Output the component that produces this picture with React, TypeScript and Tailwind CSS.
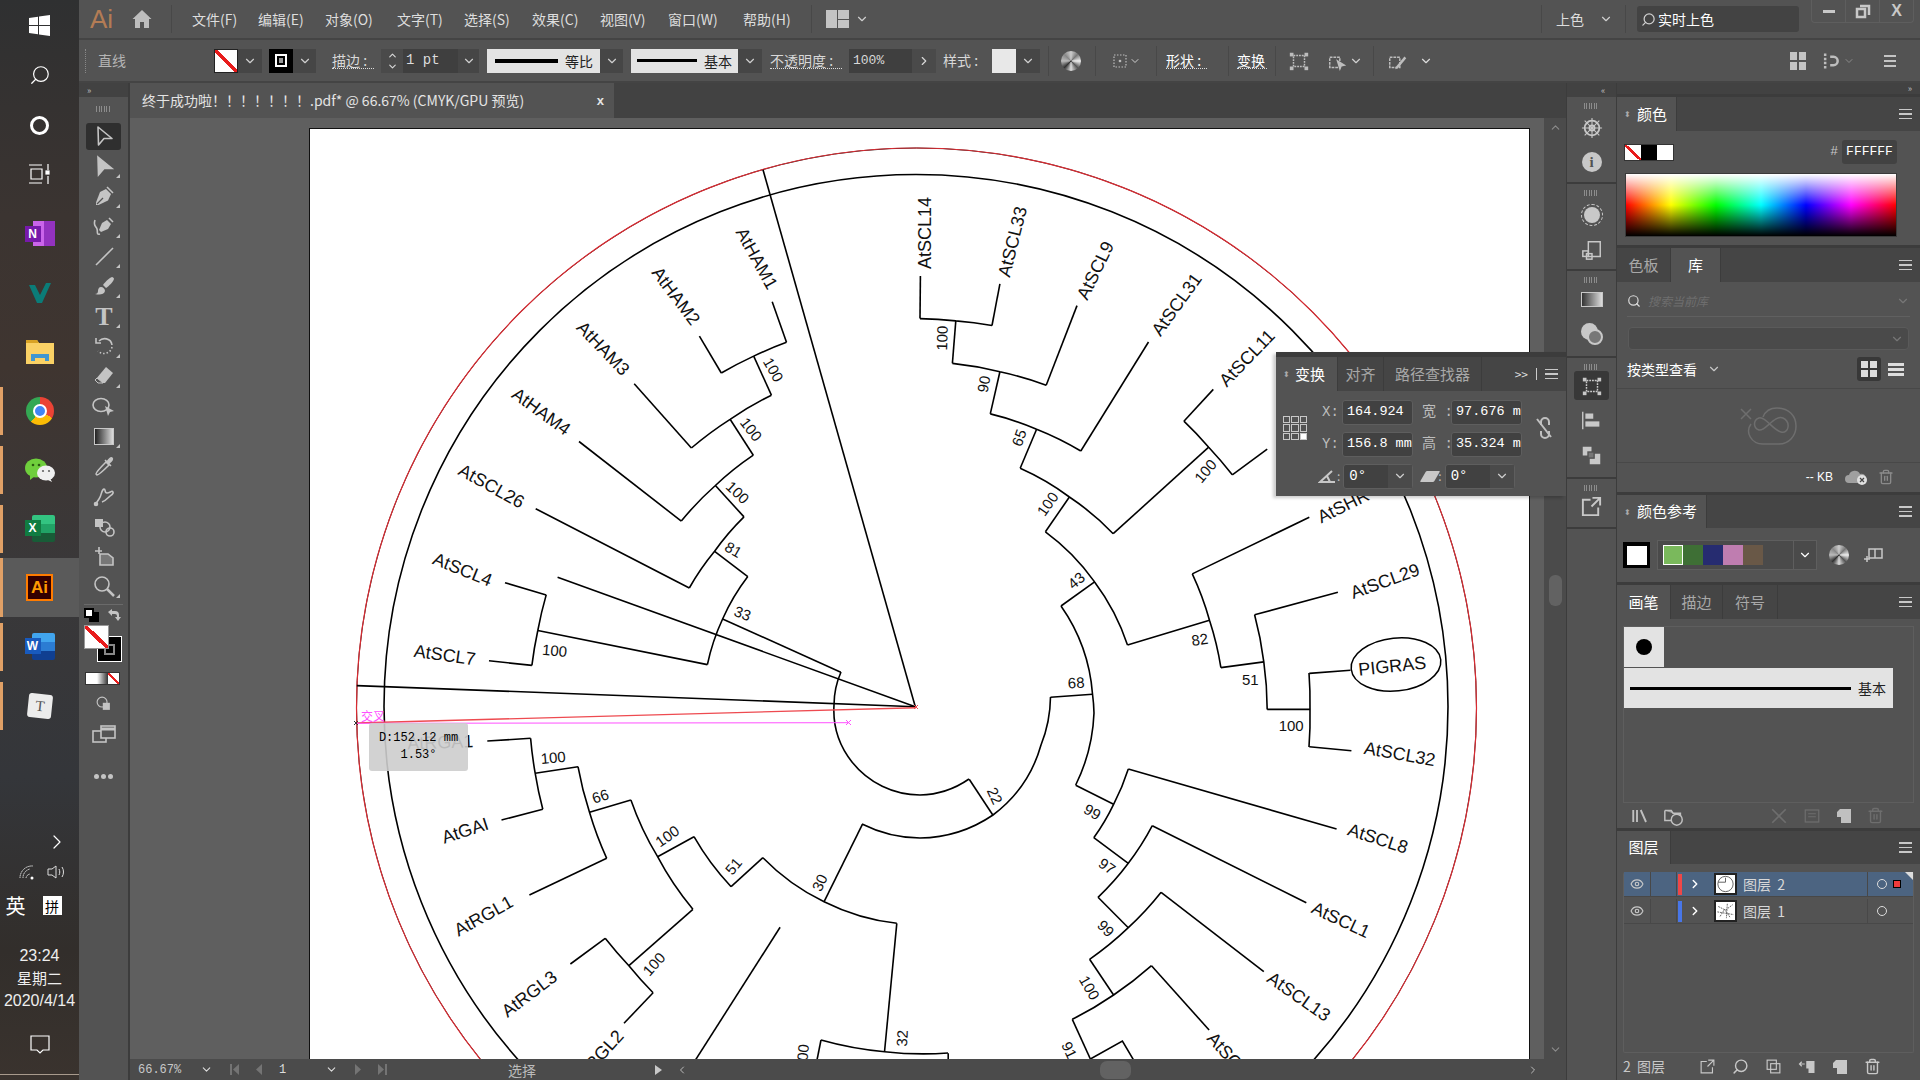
import type { ReactNode } from 'react';
import { ChevronDown, ChevronRight, Eye, Search, Trash2 } from 'lucide-react';

type Zone = (x: number, y: number) => [number, number];

// crop coordinates -> page coordinates, the tree was traced from four crops
const P: Zone = (x, y) => [x, y];
const A: Zone = (x, y) => [300 + x / 2.376, 120 + y / 2.613];
const B: Zone = (x, y) => [880 + x / 2.376, 120 + y / 2.613];
const C: Zone = (x, y) => [340 + x / 2.613, 680 + y / 3];
const D: Zone = (x, y) => [880 + x / 2.376, 680 + y / 3];

const CX = 916;
const CY = 706;

const points = (z: Zone, n: number[]) => {
  const out: [number, number][] = [];
  for (let i = 0; i < n.length; i += 2) out.push(z(n[i], n[i + 1]));
  return out;
};

const l = (z: Zone, ...n: number[]) =>
  points(z, n)
    .map(([x, y], i) => `${i ? 'L' : 'M'}${x.toFixed(1)} ${y.toFixed(1)}`)
    .join(' ');

const a = (z: Zone, ...n: number[]) => {
  const pts = points(z, n);
  let d = `M${pts[0][0].toFixed(1)} ${pts[0][1].toFixed(1)}`;
  for (let i = 1; i < pts.length; i++) {
    const [x0, y0] = pts[i - 1];
    const [x1, y1] = pts[i];
    const r = (Math.hypot(x0 - CX, y0 - CY) + Math.hypot(x1 - CX, y1 - CY)) / 2;
    const sweep = (x0 - CX) * (y1 - CY) - (y0 - CY) * (x1 - CX) > 0 ? 1 : 0;
    d += ` A${r.toFixed(1)} ${r.toFixed(1)} 0 0 ${sweep} ${x1.toFixed(1)} ${y1.toFixed(1)}`;
  }
  return d;
};

const TREE = [
  l(A, 1100, 130, 1462, 1533),
  l(A, 135, 1478, 1462, 1533),
  l(A, 612, 1195, 1462, 1533),
  l(A, 1122, 475, 1156, 581),
  a(A, 1156, 581, 1078, 617, 1001, 661),
  l(A, 1001, 661, 949, 565),
  l(A, 1078, 617, 1120, 719),
  a(A, 1120, 719, 1022, 782, 930, 857),
  l(A, 930, 857, 794, 689),
  l(A, 1022, 782, 1077, 876),
  a(A, 1077, 876, 987, 955, 906, 1048),
  l(A, 906, 1048, 663, 840),
  l(A, 987, 955, 1055, 1037),
  a(A, 1055, 1037, 985, 1127, 925, 1223),
  l(A, 925, 1223, 560, 1016),
  l(A, 985, 1127, 1064, 1193),
  a(A, 1064, 1193, 1004, 1304, 968, 1423),
  l(A, 968, 1423, 565, 1334),
  a(A, 585, 1241, 565, 1334, 551, 1425),
  l(A, 585, 1241, 487, 1209),
  l(A, 551, 1425, 449, 1413),
  l(A, 1004, 1304, 1285, 1443),
  a(P, 841, 672, 834, 705, 852, 762, 920, 795, 969, 779),
  l(D, 268, 405, 212, 298),
  a(P, 1050.5, 697, 1041, 745, 993, 815, 920, 838, 862, 824),
  l(C, 1365, 433, 1265, 665),
  a(C, 1105, 533, 1265, 665, 1455, 730),
  l(C, 1105, 533, 1022, 620),
  a(C, 925, 470, 1022, 620),
  l(C, 925, 470, 830, 530),
  a(C, 760, 360, 830, 530, 922, 688),
  l(C, 760, 360, 652, 397),
  a(C, 622, 260, 652, 397, 697, 535),
  l(C, 622, 260, 510, 280),
  a(C, 498, 175, 510, 280, 530, 388),
  l(C, 498, 175, 385, 183),
  l(C, 530, 388, 422, 420),
  l(C, 697, 535, 495, 645),
  l(C, 922, 688, 755, 857),
  a(C, 693, 775, 755, 857, 818, 938),
  l(C, 693, 775, 602, 852),
  l(C, 818, 938, 742, 1030),
  l(C, 1150, 742, 925, 1147),
  l(C, 1455, 730, 1423, 1113),
  a(P, 821, 1040, 884.6, 1051.7, 948, 1053),
  l(P, 821, 1040, 816, 1065),
  l(D, 162, 1120, 162, 1150),
  l(B, 96, 408, 95, 519),
  a(B, 95, 519, 180, 525, 266, 537),
  l(B, 266, 537, 285, 428),
  l(B, 180, 525, 172, 636),
  a(B, 172, 636, 285, 658, 395, 693),
  l(B, 395, 693, 468, 485),
  l(B, 285, 658, 262, 768),
  a(B, 262, 768, 372, 808, 477, 865),
  l(B, 477, 865, 638, 580),
  l(B, 372, 808, 333, 910),
  a(B, 333, 910, 450, 985, 554, 1081),
  l(B, 554, 1081, 781, 855),
  a(B, 722, 787, 781, 855, 837, 927),
  l(B, 722, 787, 792, 704),
  l(B, 837, 927, 920, 860),
  l(B, 450, 985, 393, 1076),
  a(B, 393, 1076, 510, 1207, 588, 1372),
  l(B, 510, 1207, 430, 1270),
  l(B, 588, 1372, 783, 1307),
  a(B, 742, 1186, 783, 1307, 810, 1431),
  l(B, 742, 1186, 1020, 1038),
  l(B, 810, 1431, 912, 1416),
  a(B, 890, 1293, 912, 1416, 920, 1540),
  l(B, 890, 1293, 1088, 1234),
  l(B, 920, 1540, 1022, 1540),
  a(P, 1309, 673, 1310, 709, 1309, 747),
  l(D, 1020, 200, 1120, 212),
  l(B, 1020, 1446, 1118, 1438),
  a(P, 1061, 606, 1092.5, 694, 1094, 713, 1075.7, 785),
  l(D, 405, 52, 505, 43),
  l(D, 465, 316, 555, 373),
  a(D, 590, 267, 555, 373, 508, 473),
  l(D, 590, 267, 1085, 447),
  l(D, 508, 473, 590, 550),
  a(D, 647, 437, 590, 550, 518, 652),
  l(D, 647, 437, 1013, 668),
  l(D, 518, 652, 590, 743),
  a(D, 668, 637, 590, 743, 498, 838),
  l(D, 668, 637, 912, 875),
  l(D, 498, 838, 555, 945),
  a(D, 645, 857, 555, 945, 457, 1018),
  l(D, 645, 857, 782, 1050),
  l(D, 457, 1018, 500, 1137),
  l(D, 500, 1137, 576, 1083, 605, 1145),
];

type Label = [Zone, number, number, number, string, number?, 'start' | 'end'?];

const LABELS: Label[] = [
  [A, 1085, 362, 61, 'AtHAM1'],
  [A, 893, 460, 53, 'AtHAM2'],
  [A, 720, 597, 46, 'AtHAM3'],
  [A, 573, 762, 36, 'AtHAM4'],
  [A, 455, 957, 29, 'AtSCL26'],
  [A, 386, 1175, 22, 'AtSCL4'],
  [A, 344, 1398, 8, 'AtSCL7'],
  [A, 1125, 652, 60, '100', 15],
  [A, 1072, 808, 52, '100', 15],
  [A, 1040, 973, 43, '100', 15],
  [A, 1030, 1122, 30, '81', 15],
  [A, 1052, 1289, 20, '33', 15],
  [A, 605, 1386, 5, '100', 15],
  [B, 107, 295, -90, 'AtSCL14'],
  [B, 315, 318, -76, 'AtSCL33'],
  [B, 512, 393, -64, 'AtSCL9'],
  [B, 705, 482, -54, 'AtSCL31'],
  [B, 872, 622, -46, 'AtSCL11'],
  [B, 1042, 1040, -26, 'AtSHR', 18, 'start'],
  [B, 1200, 1205, -20, 'AtSCL29'],
  [B, 1217, 1427, -6, 'PIGRAS'],
  [B, 147, 570, -88, '100', 15],
  [B, 246, 690, -80, '90', 15],
  [B, 330, 830, -70, '65', 15],
  [B, 398, 1003, -55, '100', 15],
  [B, 466, 1203, -40, '43', 15],
  [B, 760, 1357, -8, '82', 15],
  [B, 880, 1463, 0, '51', 15],
  [B, 466, 1470, -3, '68', 15],
  [B, 773, 917, -50, '100', 15],
  [D, 977, 135, 0, '100', 15],
  [D, 1235, 222, 10, 'AtSCL32'],
  [D, 1183, 476, 18, 'AtSCL8'],
  [D, 1095, 720, 25, 'AtSCL1'],
  [D, 995, 950, 35, 'AtSCL13'],
  [D, 785, 1065, 48, 'AtSCL6', 18, 'start'],
  [D, 505, 395, 30, '99', 15],
  [D, 540, 558, 35, '97', 15],
  [D, 537, 745, 45, '99', 15],
  [D, 498, 923, 60, '100', 15],
  [D, 450, 1110, 65, '91', 15],
  [D, 273, 347, 65, '22', 15],
  [D, 52, 1075, -88, '32', 15],
  [C, 557, 232, -5, '100', 15],
  [C, 680, 348, -18, '66', 15],
  [C, 855, 468, -35, '100', 15],
  [C, 1028, 558, -50, '51', 15],
  [C, 1253, 608, -65, '30', 15],
  [C, 820, 852, -48, '100', 15],
  [C, 327, 452, -18, 'AtGAI'],
  [C, 375, 708, -29, 'AtRGL1'],
  [C, 495, 942, -37, 'AtRGL3'],
  [C, 732, 1058, -48, 'AtRGL2', 18, 'end'],
  [C, 1208, 1130, -85, '100', 15],
  [C, 262, 187, -2, 'AtRGA1'],
];

function Tree() {
  return (
    <svg width={1414} height={941} viewBox="130 118 1414 941" className="block">
      <rect x="309.5" y="128.5" width="1220" height="960" fill="#fff" stroke="#111" />
      <circle cx="916.5" cy="708" r="560" fill="none" stroke="#222" strokeWidth="1" />
      <circle cx="916.5" cy="708" r="560" fill="none" stroke="#d92b32" strokeWidth="1.2" />
      <circle cx="916" cy="706.5" r="532" fill="none" stroke="#000" strokeWidth="1.6" />
      {TREE.map((d, i) => (
        <path key={i} d={d} fill="none" stroke="#000" strokeWidth="1.6" />
      ))}
      <ellipse cx="1396" cy="664.5" rx="45" ry="26.5" transform="rotate(-6 1396 664.5)" fill="#fff" stroke="#000" strokeWidth="1.5" />
      {LABELS.map(([z, x, y, rot, text, size = 18, anchor = 'middle'], i) => {
        const [px, py] = z(x, y);
        return (
          <text
            key={i}
            x={px}
            y={py}
            fontSize={size}
            textAnchor={anchor}
            dominantBaseline="central"
            transform={`rotate(${rot} ${px} ${py})`}
            fill="#111"
            className="font-['Liberation_Sans',sans-serif]"
          >
            {text}
          </text>
        );
      })}
      <path d="M356 723 L916 707.7" stroke="#ee4a50" strokeWidth="1.4" fill="none" />
      <path d="M356 723.3 L849 722.7" stroke="#ff50ff" strokeWidth="1" fill="none" />
      <path d="M846 720 l5 5 m0 -5 l-5 5" stroke="#ff50ff" fill="none" />
      <path d="M354 721 l4 4 m0 -4 l-4 4" stroke="#333" fill="none" />
      <path d="M914 705 l4 4 m0 -4 l-4 4" stroke="#ee4a50" fill="none" />
      <text x="361" y="721" fontSize="12" fill="#ff50ff" className="font-['Noto_Sans_CJK_SC',sans-serif]">
        交叉
      </text>
    </svg>
  );
}

function Ic({ w = 24, h = w, vb = '0 0 24 24', children }: { w?: number; h?: number; vb?: string; children: ReactNode }) {
  return (
    <svg width={w} height={h} viewBox={vb} fill="none" stroke="currentColor" strokeWidth="1.6" className="block shrink-0 overflow-visible">
      {children}
    </svg>
  );
}

const PEN = 'M14 5l5 5-3 6.5L6.5 21 4 21l0-2.500L8 8z';

const TOOLS: { icon: ReactNode; fly?: boolean; active?: boolean }[] = [
  { active: true, icon: <Ic><path d="M6 3l14 11.500h-8L6.500 21z" strokeLinejoin="round" /></Ic> },
  { fly: true, icon: <Ic><path d="M6 3l14 11.500h-8L6.500 21z" fill="currentColor" /></Ic> },
  { fly: true, icon: <Ic><path d={PEN} fill="currentColor" stroke="none" /><path d="M15 3l6 6" /><path d="M5 20l6-6" stroke="#535353" strokeWidth="1.200" /></Ic> },
  { fly: true, icon: <Ic><path d="M15 6l4 4-3 5-7 3-2-2 3-7z" fill="currentColor" stroke="none" /><path d="M17 4l4 4" /><path d="M3 6c-2 6 1 6 2 9s-1 6 3 5" /></Ic> },
  { fly: true, icon: <Ic><path d="M4 21L21 4" /></Ic> },
  { fly: true, icon: <Ic><path d="M20 3c-3 1-7 5-9 8l3 3c3-2 7-6 8-9 0-1-1-2-2-2z" fill="currentColor" stroke="none" /><path d="M9 13c-2 0-3 2-3 4s-1 3-3 3c4 1 9 1 10-3 0-2-2-4-4-4z" fill="currentColor" stroke="none" /></Ic> },
  { fly: true, icon: <Ic><text x="12" y="21" fontSize="26" fontWeight="700" textAnchor="middle" fill="currentColor" stroke="none" className="font-['Liberation_Serif',serif]">T</text></Ic> },
  { fly: true, icon: <Ic><path d="M7 7c4-4 12-3 13 4" /><path d="M4 4v5h5" /><path d="M20 13c-1 6-9 9-14 4" strokeDasharray="1.500 2" /></Ic> },
  { fly: true, icon: <Ic><path d="M14 3l7 6-8 10H8l-4-4z" fill="currentColor" stroke="none" /><path d="M8 19h-2l-3-3 2-2 6 5z" stroke="currentColor" fill="#535353" strokeWidth="1" /></Ic> },
  { icon: <Ic><ellipse cx="9" cy="11" rx="8" ry="6.500" /><path d="M13 12l9 5-4 1-2 4z" fill="currentColor" stroke="none" /></Ic> },
  { fly: true, icon: <div className="h-[17px] w-[20px] border border-[#c8c8c8] bg-[linear-gradient(to_right,#222,#ddd)]" /> },
  { icon: <Ic><path d="M4 20c0-2 8-10 10-12l3 3c-2 2-10 10-12 10z" /><path d="M13 6l6 6M15 8c2-3 4-5 5-4s0 3-3 5z" fill="currentColor" /></Ic> },
  { icon: <Ic><path d="M3 21l4-6c3-4 2-9 5-10 2 0 0 4 3 4s5-3 6-1-2 3-4 5-4 4-7 5" /><circle cx="4" cy="20" r="1.500" fill="currentColor" /></Ic> },
  { icon: <Ic><rect x="3" y="5" width="8" height="8" fill="currentColor" stroke="none" /><circle cx="13" cy="13" r="5" /><circle cx="18" cy="18" r="4" /></Ic> },
  { icon: <Ic><path d="M3 7h7M7 3v7" /><path d="M8 10h8l5 4v7H8z" fill="#777" /></Ic> },
  { fly: true, icon: <Ic><circle cx="10" cy="10" r="7" /><path d="M15 15l7 7" strokeWidth="2.500" /></Ic> },
];

function Chev({ size = 14, className = 'text-[#cfcfcf]' }: { size?: number; className?: string }) {
  return <ChevronDown size={size} strokeWidth={2} className={`shrink-0 ${className}`} />;
}

function Drop({ w = 24 }: { w?: number }) {
  return (
    <div className="flex h-full items-center justify-center bg-[#464646]" style={{ width: w }}>
      <Chev />
    </div>
  );
}

function Sep({ ml }: { ml: string }) {
  return <div className={`h-[30px] w-px bg-[#484848] ${ml}`} />;
}

const MENU = [
  ['文件(F)', 66],
  ['编辑(E)', 67],
  ['对象(O)', 72],
  ['文字(T)', 67],
  ['选择(S)', 68],
  ['效果(C)', 68],
  ['视图(V)', 68],
  ['窗口(W)', 75],
  ['帮助(H)', 68],
] as const;

function MenuBar() {
  return (
    <div className="flex h-[38px] items-center bg-[#535353] text-[14px] text-[#dedede]">
      <span className="ml-[11px] w-[42px] text-[26px] leading-none text-[#b37c55] font-['Liberation_Sans',sans-serif]">Ai</span>
      <svg width="20" height="20" viewBox="0 0 20 20" className="text-[#bdbdbd]">
        <path d="M10 1L0.500 10H3v9h5v-6h4v6h5v-9h2.500z" fill="currentColor" />
      </svg>
      <div className="ml-[19px] mr-[20px] h-[28px] w-px bg-[#484848]" />
      {MENU.map(([label, w]) => (
        <span key={label} className="shrink-0" style={{ width: w }}>
          {label}
        </span>
      ))}
      <div className="h-[28px] w-px bg-[#484848]" />
      <div className="ml-[14px] grid h-[18px] w-[23px] grid-cols-2 gap-[1px]">
        <div className="row-span-2 bg-[#c4c4c4]" />
        <div className="bg-[#c4c4c4]" />
        <div className="bg-[#c4c4c4]" />
      </div>
      <Chev className="ml-[6px] text-[#cfcfcf]" />
      <div className="ml-auto h-[28px] w-px bg-[#484848]" />
      <span className="ml-[14px]">上色</span>
      <Chev className="ml-[15px] text-[#cfcfcf]" />
      <div className="ml-[12px] h-[28px] w-px bg-[#484848]" />
      <div className="ml-[11px] flex h-[26px] w-[162px] items-center gap-[1px] rounded-[3px] bg-[#434343] pl-[4px] text-white">
        <Search size={15} className="-scale-x-100 text-[#d0d0d0]" />
        <span className="ml-[1px]">实时上色</span>
      </div>
      <div className="ml-[12px] mr-[6px] flex h-[23px] w-[103px] self-start rounded-b-[4px] border border-t-0 border-[#5e5e5e] text-[#c8c8c8]">
        <div className="flex flex-1 items-center justify-center border-r border-[#5e5e5e]">
          <div className="h-[3px] w-[12px] bg-[#c8c8c8]" />
        </div>
        <div className="flex flex-1 items-center justify-center border-r border-[#5e5e5e]">
          <svg width="18" height="18" viewBox="0 0 18 18" fill="none" stroke="currentColor" strokeWidth="2.500">
            <path d="M6 4h9v9M3 7h8v8H3z" />
          </svg>
        </div>
        <div className="flex flex-1 items-center justify-center text-[16px] font-bold font-['Liberation_Sans',sans-serif]">X</div>
      </div>
    </div>
  );
}

function TransformGlyph({ w = 22 }: { w?: number }) {
  return (
    <Ic w={w}>
      <rect x="6" y="6" width="12" height="12" strokeDasharray="2 1" />
      <rect x="2" y="3" width="4" height="4" fill="currentColor" stroke="none" />
      <rect x="18" y="3" width="4" height="4" fill="currentColor" stroke="none" />
      <rect x="2" y="18" width="4" height="4" fill="currentColor" stroke="none" />
      <rect x="18" y="18" width="4" height="4" fill="currentColor" stroke="none" />
    </Ic>
  );
}

function Wheel({ size = 20 }: { size?: number }) {
  return (
    <div
      className="shrink-0 rounded-full bg-[conic-gradient(#ccc,#777,#eee,#555,#ddd,#333,#bbb,#888,#ccc)]"
      style={{ width: size, height: size }}
    />
  );
}

function Diag({ className = '' }: { className?: string }) {
  return <div className={`bg-[linear-gradient(to_top_right,#fff_44%,#e81c1c_44%,#e81c1c_56%,#fff_56%)] ${className}`} />;
}

function ControlBar() {
  return (
    <div className="flex h-[41px] items-center bg-[#535353] text-[14px] text-[#d8d8d8]">
      <div className="ml-[6px] h-[24px] w-px border-l border-dotted border-[#888]" />
      <span className="ml-[12px] w-[30px] shrink-0 text-[#b5b5b5]">直线</span>
      <div className="ml-[86px] flex h-[24px] w-[48px] rounded-[2px]">
        <Diag className="w-[24px] border border-[#222]" />
        <Drop />
      </div>
      <div className="ml-[7px] flex h-[24px] w-[47px]">
        <div className="flex w-[24px] items-center justify-center bg-black">
          <div className="flex h-[13px] w-[12px] items-center justify-center border-2 border-white">
            <div className="h-[5px] w-[4px] bg-[#999]" />
          </div>
        </div>
        <Drop w={23} />
      </div>
      <span className="ml-[16px] w-[42px] shrink-0 border-b border-dotted border-[#ddd] leading-[16px]">描边 :</span>
      <div className="ml-[7px] flex h-[24px] w-[98px] items-center bg-[#4a4a4a]">
        <div className="flex w-[22px] flex-col items-center">
          <ChevronDown size={11} strokeWidth={2.500} className="rotate-180" />
          <ChevronDown size={11} strokeWidth={2.500} />
        </div>
        <span className="flex h-full w-[55px] items-center bg-[#3f3f3f] pl-[3px] text-[14px] text-[#dcdcdc] font-['Liberation_Mono',monospace]">1 pt</span>
        <Drop w={21} />
      </div>
      <div className="ml-[8px] flex h-[24px] w-[136px]">
        <div className="flex w-[113px] items-center bg-[#e3e3e3] pl-[8px] text-[#222]">
          <div className="h-[4px] w-[63px] bg-black" />
          <span className="ml-[7px] text-[14px] leading-none">等比</span>
        </div>
        <Drop w={23} />
      </div>
      <div className="ml-[8px] flex h-[24px] w-[131px]">
        <div className="flex w-[107px] items-center bg-[#e3e3e3] pl-[6px] text-[#222]">
          <div className="h-[3px] w-[60px] bg-black" />
          <span className="ml-[7px] text-[14px] leading-none">基本</span>
        </div>
        <Drop />
      </div>
      <span className="ml-[8px] w-[72px] shrink-0 border-b border-dotted border-[#ddd] leading-[16px]">不透明度 :</span>
      <div className="ml-[7px] flex h-[24px] w-[87px] items-center bg-[#3f3f3f]">
        <span className="w-[63px] pl-[4px] text-[13px] font-['Liberation_Mono',monospace]">100%</span>
        <div className="flex h-full w-[24px] items-center justify-center bg-[#4a4a4a]">
          <ChevronRight size={14} />
        </div>
      </div>
      <span className="ml-[7px] w-[38px] shrink-0">样式 :</span>
      <div className="ml-[11px] flex h-[24px] w-[48px]">
        <div className="w-[24px] bg-[#e8e8e8]" />
        <Drop />
      </div>
      <Sep ml="ml-[8px]" />
      <div className="ml-[12px]">
        <Wheel />
      </div>
      <Sep ml="ml-[14px]" />
      <div className="ml-[15px] flex items-center text-[#bdbdbd]">
        <Ic w={18}><rect x="4" y="4" width="16" height="16" strokeDasharray="2 2" /><circle cx="12" cy="12" r="1" fill="currentColor" /></Ic>
        <Chev size={12} />
      </div>
      <Sep ml="ml-[15px]" />
      <span className="ml-[9px] w-[41px] shrink-0 border-b border-dotted border-[#ddd] leading-[16px] text-white">形状 :</span>
      <Sep ml="ml-[21px]" />
      <span className="ml-[8px] w-[30px] shrink-0 border-b border-dotted border-[#ddd] text-[14px] leading-[16px] text-white">变换</span>
      <Sep ml="ml-[8px]" />
      <div className="ml-[12px] text-[#bdbdbd]">
        <TransformGlyph />
      </div>
      <div className="ml-[17px] flex items-center text-[#bdbdbd]">
        <Ic w={22}><rect x="3" y="8" width="11" height="11" strokeDasharray="3 1" /><path d="M10 10l11 7-5 1-2 5z" fill="currentColor" stroke="none" /></Ic>
        <Chev size={14} />
      </div>
      <Sep ml="ml-[10px]" />
      <div className="ml-[13px] text-[#bdbdbd]">
        <Ic w={22}><rect x="3" y="8" width="11" height="11" strokeDasharray="3 1" /><path d="M19 7l2 2-9 11-3 1 1-3z" fill="currentColor" stroke="none" /></Ic>
      </div>
      <Chev className="ml-[10px] text-[#dcdcdc]" />
      <div className="ml-auto flex items-center text-[#bdbdbd]">
        <div className="grid grid-cols-2 gap-[2px]">
          <div className="h-[8px] w-[7px] bg-[#c4c4c4]" />
          <div className="h-[8px] w-[7px] bg-[#c4c4c4]" />
          <div className="h-[8px] w-[7px] bg-[#c4c4c4]" />
          <div className="h-[8px] w-[7px] bg-[#c4c4c4]" />
        </div>
        <div className="ml-[15px]">
          <Ic w={20}><path d="M5 3v18" strokeWidth="3" strokeDasharray="3 2" /><path d="M11 7h4a5 5 0 010 10h-4" strokeWidth="3" /></Ic>
        </div>
        <Chev size={12} className="ml-[2px] text-[#8a8a8a]" />
        <div className="ml-[29px] mr-[24px] flex flex-col gap-[3px]">
          <div className="h-[2px] w-[12px] bg-[#c4c4c4]" />
          <div className="h-[2px] w-[12px] bg-[#c4c4c4]" />
          <div className="h-[2px] w-[12px] bg-[#c4c4c4]" />
        </div>
      </div>
    </div>
  );
}

function Grip() {
  return <div className="mx-auto h-[6px] w-[15px] bg-[repeating-linear-gradient(to_right,#8c8c8c_0_1px,transparent_1px_2.500px)]" />;
}

function LeftTools() {
  return (
    <div className="flex w-[51px] shrink-0 flex-col border-r-2 border-[#3c3c3c] bg-[#535353] text-[#c4c4c4]">
      <div className="flex h-[14px] items-center bg-[#424242] pl-[8px] text-[9px] leading-none text-[#bbb]">»</div>
      <div className="flex h-[24px] items-center">
        <Grip />
      </div>
      <div className="flex flex-col">
        {TOOLS.map((t, i) => (
          <div key={i} className="relative mx-[6px] flex h-[30px] items-center justify-center">
            <div className={t.active ? 'flex h-[27px] w-[35px] items-center justify-center rounded-[3px] bg-[#2f2f2f]' : 'flex'}>{t.icon}</div>
            {t.fly && <div className="absolute bottom-[3px] right-[2px] h-0 w-0 border-b-[4px] border-l-[4px] border-b-[#c4c4c4] border-l-transparent" />}
          </div>
        ))}
      </div>
      <div className="mx-[5px] mt-[3px] h-px bg-[#6a6a6a]" />
      <div className="flex h-[20px] items-center justify-between px-[5px]">
        <div className="relative h-[14px] w-[15px]">
          <div className="absolute bottom-0 right-0 h-[10px] w-[10px] border-2 border-black bg-black" />
          <div className="absolute left-0 top-0 h-[10px] w-[10px] border-2 border-black bg-white" />
        </div>
        <svg width="14" height="14" viewBox="0 0 14 14" className="mr-[2px] text-[#c4c4c4]"><path d="M1 4l4-3v2h3a4 4 0 014 4v2h2l-3 4-3-4h2V8a2 2 0 00-2-2H5v2z" fill="currentColor" /></svg>
      </div>
      <div className="relative mx-[5px] h-[38px]">
        <div className="absolute left-[14px] top-[12px] flex h-[24px] w-[23px] items-center justify-center bg-black outline outline-1 outline-white">
          <div className="h-[11px] w-[11px] border-2 border-[#888]" />
        </div>
        <Diag className="absolute left-0 top-0 h-[24px] w-[25px] border border-[#999]" />
      </div>
      <div className="mx-[6px] mt-[9px] flex h-[13px] w-[35px] bg-[#333] p-[1px]">
        <div className="w-[11px] bg-white" />
        <div className="w-[11px] bg-[linear-gradient(to_right,#fff,#333)]" />
        <Diag className="w-[11px]" />
      </div>
      <div className="mt-[10px] flex justify-center">
        <Ic w={17}><circle cx="10" cy="10" r="7" /><rect x="11" y="11" width="10" height="10" fill="currentColor" stroke="none" /></Ic>
      </div>
      <div className="mt-[10px] flex justify-center">
        <Ic w={24}><rect x="1" y="9" width="13" height="11" /><rect x="9" y="4" width="14" height="12" fill="#535353" /><path d="M9 7h14" strokeWidth="3" /></Ic>
      </div>
      <div className="mt-[28px] flex justify-center gap-[2px]">
        <div className="h-[5px] w-[5px] rounded-full bg-[#c4c4c4]" />
        <div className="h-[5px] w-[5px] rounded-full bg-[#c4c4c4]" />
        <div className="h-[5px] w-[5px] rounded-full bg-[#c4c4c4]" />
      </div>
    </div>
  );
}

function Hamburger() {
  return (
    <div className="flex flex-col gap-[3px]">
      <div className="h-[1.500px] w-[13px] bg-[#c8c8c8]" />
      <div className="h-[1.500px] w-[13px] bg-[#c8c8c8]" />
      <div className="h-[1.500px] w-[13px] bg-[#c8c8c8]" />
    </div>
  );
}

type Tab = { label: string; w: number; grip?: boolean };

function Tabs({ tabs, active = 0, h, menu = true }: { tabs: Tab[]; active?: number; h: number; menu?: boolean }) {
  return (
    <div className="flex shrink-0 items-stretch bg-[#454545] text-[15px]" style={{ height: h }}>
      {tabs.map((t, i) => (
        <div
          key={t.label}
          className={`flex shrink-0 items-center border-r border-[#3c3c3c] ${t.grip ? 'pl-[7px]' : 'justify-center'} ${i === active ? 'bg-[#535353] text-white' : 'text-[#a8a8a8]'}`}
          style={{ width: t.w }}
        >
          {t.grip && <span className="mr-[6px] text-[8px] leading-[6px] text-[#aaa]">⬍</span>}
          {t.label}
        </div>
      ))}
      {menu && (
        <div className="ml-auto flex items-center pr-[8px]">
          <Hamburger />
        </div>
      )}
    </div>
  );
}

function ColorPanel() {
  return (
    <section className="h-[148px] shrink-0 bg-[#535353]">
      <Tabs tabs={[{ label: '颜色', w: 60, grip: true }]} h={34} />
      <div className="flex h-[42px] items-center pl-[7px] pr-[23px]">
        <div className="flex h-[17px] border border-[#333]">
          <Diag className="w-[16px]" />
          <div className="w-[16px] bg-black" />
          <div className="w-[16px] bg-white" />
        </div>
        <span className="ml-auto text-[13px] text-[#c8c8c8] font-['Liberation_Mono',monospace]">#</span>
        <div className="ml-[4px] flex h-[24px] w-[55px] items-center justify-center rounded-[3px] bg-[#424242] text-[13px] text-white font-['Liberation_Mono',monospace]">FFFFFF</div>
      </div>
      <div className="ml-[8px] h-[64px] w-[272px] border border-[#3a3a3a] bg-[linear-gradient(to_bottom,#fff_0%,rgba(255,255,255,0)_50%,rgba(0,0,0,0)_50%,#000_100%),linear-gradient(to_right,#f00,#ff0,#0f0,#0ff,#00f,#f0f,#f00)]" />
    </section>
  );
}

function LibraryPanel() {
  return (
    <section className="h-[244px] shrink-0 bg-[#535353]">
      <Tabs tabs={[{ label: '色板', w: 54 }, { label: '库', w: 50 }]} active={1} h={34} />
      <div className="mx-[10px] mt-[4px] flex h-[31px] items-center border-b border-[#606060]">
        <Search size={14} className="text-[#ddd]" />
        <span className="ml-[7px] text-[12px] italic text-[#6e6e6e]">搜索当前库</span>
        <Chev className="ml-auto text-[#777]" />
      </div>
      <div className="mx-[11px] mt-[10px] flex h-[23px] items-center justify-end rounded-[4px] border border-[#5a5a5a] bg-[#4a4a4a] pr-[4px]">
        <Chev className="text-[#777]" />
      </div>
      <div className="flex h-[39px] items-center border-b border-[#484848] pl-[10px] pr-[16px] text-[14px] text-white">
        按类型查看
        <Chev className="ml-[10px] text-[#c8c8c8]" />
        <div className="ml-auto grid h-[24px] w-[24px] grid-cols-2 content-center justify-center gap-[2px] rounded-[3px] bg-[#383838] px-[4px]">
          <div className="h-[7px] bg-[#ddd]" />
          <div className="h-[7px] bg-[#ddd]" />
          <div className="h-[7px] bg-[#ddd]" />
          <div className="h-[7px] bg-[#ddd]" />
        </div>
        <div className="ml-[7px] flex flex-col gap-[2px]">
          <div className="h-[3px] w-[16px] bg-[#ddd]" />
          <div className="h-[3px] w-[16px] bg-[#ddd]" />
          <div className="h-[3px] w-[16px] bg-[#ddd]" />
        </div>
      </div>
      <div className="flex h-[74px] items-center justify-center border-b border-[#484848] text-[#6e6e6e]">
        <svg width="60" height="44" viewBox="0 0 60 44" fill="none" stroke="currentColor" strokeWidth="1.500">
          <path d="M2 5l10 10M12 5L2 15" />
          <path d="M12 20c-6 8 0 20 12 20h16c10 0 17-8 17-18S50 4 38 4c-7 0-12 4-14 9" />
          <path d="M44 14c-8-4-18 14-24 12s-6-10 0-12 14 12 22 14 10-10 2-14z" />
        </svg>
      </div>
      <div className="flex h-[28px] items-center justify-end pr-[26px] text-[#d0d0d0]">
        <span className="text-[12px] text-white font-['Liberation_Sans',sans-serif]">-- KB</span>
        <svg width="24" height="18" viewBox="0 0 24 18" className="ml-[11px]">
          <path d="M5 15a4 4 0 010-8 6 6 0 0111-1 5 5 0 014 9z" fill="#a0a0a0" />
          <circle cx="18" cy="12" r="5" fill="#e0e0e0" />
          <path d="M16 10l4 4m0-4l-4 4" stroke="#444" strokeWidth="1.200" />
        </svg>
        <Trash2 size={16} className="ml-[10px] text-[#8a8a8a]" />
      </div>
    </section>
  );
}

const GUIDE = ['#3e6f35', '#262c70', '#bf7db0', '#695847'];

function GuidePanel() {
  return (
    <section className="h-[87px] shrink-0 bg-[#535353]">
      <Tabs tabs={[{ label: '颜色参考', w: 90, grip: true }]} h={33} />
      <div className="flex h-[54px] items-center pl-[6px]">
        <div className="flex h-[26px] w-[27px] items-center justify-center bg-black">
          <div className="h-[19px] w-[20px] bg-white" />
        </div>
        <div className="ml-[7px] flex h-[30px] w-[160px] items-center border border-[#5e5e5e] bg-[#4a4a4a] pl-[5px]">
          <div className="h-[20px] w-[20px] border border-white bg-[#7ab95c]" />
          {GUIDE.map((c) => (
            <div key={c} className="h-[20px] w-[20px]" style={{ background: c }} />
          ))}
          <div className="ml-auto flex h-full w-[23px] items-center justify-center border-l border-[#5e5e5e]">
            <Chev className="text-white" />
          </div>
        </div>
        <div className="ml-[12px]">
          <Wheel />
        </div>
        <div className="ml-[14px] text-[#c8c8c8]">
          <svg width="20" height="16" viewBox="0 0 20 16" fill="none" stroke="currentColor" strokeWidth="1.500">
            <rect x="6" y="2" width="13" height="9" />
            <path d="M12 2v9M1 12h6M4 9v6" />
          </svg>
        </div>
      </div>
    </section>
  );
}

function BrushPanel() {
  return (
    <section className="flex h-[243px] shrink-0 flex-col bg-[#535353]">
      <Tabs tabs={[{ label: '画笔', w: 54 }, { label: '描边', w: 52 }, { label: '符号', w: 55 }]} h={34} />
      <div className="mx-[6px] mt-[7px] h-[177px] border border-[#5e5e5e]">
        <div className="flex h-[40px] w-[40px] items-center justify-center bg-[#e3e3e3]">
          <div className="h-[16px] w-[16px] rounded-full bg-black" />
        </div>
        <div className="mt-[1px] flex h-[40px] w-[269px] items-center bg-[#e3e3e3] pl-[6px] text-[14px] text-[#222]">
          <div className="h-[3px] w-[221px] bg-black" />
          <span className="ml-[7px]">基本</span>
        </div>
      </div>
      <div className="relative flex flex-1 items-center pl-[14px] text-[#c0c0c0]">
        <Ic w={18}><path d="M3 4v16M8 4v16M13 4l7 16" strokeWidth="2.500" /></Ic>
        <div className="ml-[14px]">
          <Ic w={22}><path d="M2 6h7l2 3h8v3" fill="#999" /><circle cx="15" cy="16" r="6" /><path d="M2 6v11h7" /></Ic>
        </div>
        <div className="ml-[85px] flex items-center gap-[15px] text-[#6e6e6e]">
          <Ic w={18}><path d="M3 3l18 18M21 3L3 21" strokeWidth="2.200" /></Ic>
          <Ic w={18}><rect x="3" y="4" width="18" height="16" /><path d="M7 9h10M7 13h10" /></Ic>
          <div className="text-[#c0c0c0]">
            <NewItem />
          </div>
          <Trash2 size={17} />
        </div>
      </div>
    </section>
  );
}

function NewItem() {
  return (
    <svg width="16" height="16" viewBox="0 0 16 16">
      <path d="M1 4l3-3h11v14H5v-6H1z" fill="currentColor" />
    </svg>
  );
}

function LayerRow({ name, color, active, thumb }: { name: string; color: string; active?: boolean; thumb: ReactNode }) {
  return (
    <div className={`relative flex h-[25px] items-center border-b border-[#484848] text-[14px] ${active ? 'bg-[#4c6481]' : ''}`}>
      <div className="flex h-full w-[27px] items-center justify-center border-r border-[#484848] text-[#c8c8c8]">
        <Eye size={14} />
      </div>
      <div className="h-full w-[26px] border-r border-[#484848]" />
      <div className="ml-[1px] h-[21px] w-[4px]" style={{ background: color }} />
      <ChevronRight size={14} strokeWidth={2.500} className="ml-[6px] text-white" />
      <div className="ml-[12px] h-[22px] w-[23px] border-2 border-[#222] bg-white">{thumb}</div>
      <span className="ml-[6px] whitespace-pre text-[#d8d8d8]">{name}</span>
      <div className="ml-auto flex h-full w-[46px] items-center border-l border-[#484848] pl-[9px]">
        <div className="h-[10px] w-[10px] rounded-full border border-[#ddd]" />
        {active && <div className="ml-[6px] h-[8px] w-[8px] border border-black bg-[#ef3b3b]" />}
      </div>
      {active && <div className="absolute right-0 top-0 h-0 w-0 border-b-[8px] border-l-[8px] border-b-transparent border-l-transparent border-t-0 border-r-[8px] border-r-[#ddd]" />}
    </div>
  );
}

function LayersPanel() {
  return (
    <section className="flex flex-1 flex-col bg-[#535353]">
      <Tabs tabs={[{ label: '图层', w: 54 }]} h={33} />
      <div className="mx-[6px] mt-[8px] h-[180px] flex-1 rounded-[2px] border-b border-l border-r border-[#5e5e5e]">
        <LayerRow
          name="图层  2"
          color="#ef4747"
          active
          thumb={
            <svg viewBox="0 0 20 20" className="h-full w-full">
              <circle cx="10" cy="10" r="8.500" fill="none" stroke="#555" />
              <path d="M2 8h8V3" fill="none" stroke="#555" />
            </svg>
          }
        />
        <div className="h-[2px]" />
        <LayerRow
          name="图层  1"
          color="#4876e8"
          thumb={
            <svg viewBox="0 0 20 20" className="h-full w-full" stroke="#555" strokeWidth="1">
              <path d="M2 5l8 4 8-6M4 16l5-8 6 9M1 11l18 3M12 2l-1 16" fill="none" strokeDasharray="2 1" />
            </svg>
          }
        />
      </div>
      <div className="flex h-[27px] shrink-0 items-center pl-[6px] text-[14px] text-[#c8c8c8]">
        <span className="whitespace-pre">2  图层</span>
        <div className="ml-[34px] flex items-center gap-[16px] text-[#c8c8c8]">
          <Ic w={17}><path d="M11 5H3v16h16v-8M13 3h8v8M21 3l-9 9" /></Ic>
          <div className="-scale-x-100">
            <Search size={17} />
          </div>
          <Ic w={17}><rect x="3" y="3" width="13" height="13" /><rect x="8" y="8" width="13" height="13" /></Ic>
          <Ic w={18}><path d="M2 8h7M5 5l-3 3 3 3" /><path d="M11 4h11v16H14v-6h-3z" fill="currentColor" stroke="none" /></Ic>
          <NewItem />
          <Trash2 size={17} />
        </div>
      </div>
    </section>
  );
}

function DockGroup({ h, children }: { h: number; children: ReactNode }) {
  return (
    <div className="flex shrink-0 flex-col items-center border-b-2 border-[#3c3c3c] pt-[6px]" style={{ height: h }}>
      <Grip />
      {children}
    </div>
  );
}

function Dock() {
  return (
    <div className="flex w-[51px] shrink-0 flex-col border-x border-[#3c3c3c] bg-[#535353] text-[#c8c8c8]">
      <div className="flex h-[14px] shrink-0 items-center bg-[#424242] pl-[34px] text-[9px] leading-none text-[#bbb]">«</div>
      <DockGroup h={87}>
        <div className="mt-[8px]">
          <Ic w={22}><circle cx="12" cy="12" r="8" strokeWidth="2" /><circle cx="12" cy="12" r="3" /><path d="M12 1v22M1 12h22M4 4l16 16M20 4L4 20" strokeWidth="1.200" /></Ic>
        </div>
        <div className="mt-[13px] flex h-[20px] w-[20px] items-center justify-center rounded-full bg-[#c8c8c8] text-[15px] font-bold leading-none text-[#535353] font-['Liberation_Serif',serif]">i</div>
      </DockGroup>
      <DockGroup h={87}>
        <div className="mt-[8px] flex h-[22px] w-[22px] items-center justify-center rounded-full border border-dashed border-[#c8c8c8]">
          <div className="h-[16px] w-[16px] rounded-full bg-[#c8c8c8]" />
        </div>
        <div className="mt-[13px]">
          <Ic w={22}><path d="M8 3h13v16H8z" /><rect x="2" y="13" width="6" height="6" /><rect x="6" y="16" width="6" height="6" /></Ic>
        </div>
      </DockGroup>
      <DockGroup h={87}>
        <div className="mt-[9px] h-[15px] w-[22px] border border-[#c8c8c8] bg-[linear-gradient(to_right,#333,#ddd)]" />
        <div className="relative mt-[16px] h-[22px] w-[22px]">
          <div className="absolute left-0 top-0 h-[17px] w-[17px] rounded-full bg-[#c8c8c8]" />
          <div className="absolute bottom-0 right-0 h-[16px] w-[16px] rounded-full border-2 border-[#c8c8c8] bg-[#777]" />
        </div>
      </DockGroup>
      <DockGroup h={121}>
        <div className="mt-[1px] flex h-[29px] w-[35px] items-center justify-center rounded-[3px] bg-[#383838]">
          <TransformGlyph />
        </div>
        <div className="mt-[10px]">
          <Ic w={21}><path d="M2 2v20" /><rect x="5" y="4" width="9" height="6" fill="currentColor" stroke="none" /><rect x="5" y="13" width="16" height="6" fill="currentColor" stroke="none" /></Ic>
        </div>
        <div className="mt-[14px]">
          <Ic w={21}><rect x="2" y="2" width="10" height="10" fill="currentColor" stroke="none" /><rect x="10" y="10" width="12" height="12" fill="currentColor" stroke="none" /><rect x="8" y="8" width="7" height="7" fill="#777" stroke="#535353" /></Ic>
        </div>
      </DockGroup>
      <DockGroup h={50}>
        <div className="mt-[4px]">
          <Ic w={23}><path d="M11 5H3v16h16v-8M13 3h8v8M21 3l-9 9" strokeWidth="2" /></Ic>
        </div>
      </DockGroup>
    </div>
  );
}

function TransformPanel() {
  const field = "flex h-[25px] items-center overflow-hidden whitespace-nowrap rounded-[3px] border border-[#5e5e5e] bg-[#414141] pl-[4px] text-[13.5px] text-white font-['Liberation_Mono',monospace]";
  const label = "whitespace-nowrap text-[14px] text-[#bdbdbd] font-['Liberation_Mono','Noto_Sans_CJK_SC',monospace]";
  return (
    <div className="absolute left-[1146px] top-[269px] z-10 w-[290px] bg-[#535353] shadow-[-3px_2px_3px_rgba(0,0,0,0.2)]">
      <div className="h-[5px] bg-[#3c3c3c]" />
      <div className="flex h-[34px] bg-[#454545] text-[15px]">
        <div className="flex w-[62px] items-center border-r border-[#3c3c3c] bg-[#535353] pl-[7px] text-white">
          <span className="mr-[5px] text-[8px] text-[#aaa]">⬍</span>变换
        </div>
        <div className="flex w-[46px] items-center justify-center border-r border-[#3c3c3c] text-[#a8a8a8]">对齐</div>
        <div className="flex w-[98px] items-center justify-center border-r border-[#3c3c3c] text-[#a8a8a8]">路径查找器</div>
        <div className="ml-auto flex items-center gap-[8px] pr-[8px] text-[12px] text-[#ddd]">
          <span>&gt;&gt;</span>
          <div className="h-[12px] w-px bg-[#ccc]" />
          <Hamburger />
        </div>
      </div>
      <div className="grid h-[105px] grid-cols-[46px_20px_71px_9px_29px_71px_1fr] grid-rows-[32px_32px_32px] items-center pt-[5px]">
        <div className="row-span-2 ml-[7px] grid h-[24px] w-[24px] grid-cols-3 gap-[1px]">
          {Array.from({ length: 9 }).map((_, i) => (
            <div key={i} className={`border border-[#c8c8c8] ${i === 8 ? 'bg-white' : ''}`} />
          ))}
        </div>
        <span className={label}>X:</span>
        <div className={field}>164.924</div>
        <span />
        <span className={label}>宽 :</span>
        <div className={field}>97.676 m</div>
        <div className="row-span-2 flex justify-center text-[#c0c0c0]">
          <svg width="20" height="24" viewBox="0 0 20 24" fill="none" stroke="currentColor" strokeWidth="2">
            <path d="M7 9V6a4 4 0 018 0v3M7 15v3a4 4 0 008 0v-3M3 3l14 18" />
          </svg>
        </div>
        <span className={label}>Y:</span>
        <div className={field}>156.8 mm</div>
        <span />
        <span className={label}>高 :</span>
        <div className={field}>35.324 m</div>
        <div className="col-span-7 flex h-[25px] items-center pl-[42px]">
          <svg width="19" height="14" viewBox="0 0 19 14" fill="none" stroke="#c8c8c8" strokeWidth="2"><path d="M17 13H2L14 2M9 7l3 6" /></svg>
          <span className="text-[12px] text-[#bdbdbd]">:</span>
          <div className="ml-[3px] flex h-[25px] w-[70px] items-center rounded-[3px] border border-[#5e5e5e] bg-[#414141] pl-[5px] text-[14px] text-white font-['Liberation_Mono',monospace]">
            0°
            <div className="ml-auto flex h-full w-[24px] items-center justify-center bg-[#4a4a4a]">
              <Chev />
            </div>
          </div>
          <div className="ml-[10px] h-[11px] w-[14px] -skew-x-[30deg] rounded-[1px] bg-[#c8c8c8]" />
          <span className="ml-[1px] text-[12px] text-[#bdbdbd]">:</span>
          <div className="ml-[3px] flex h-[25px] w-[70px] items-center rounded-[3px] border border-[#5e5e5e] bg-[#414141] pl-[5px] text-[14px] text-white font-['Liberation_Mono',monospace]">
            0°
            <div className="ml-auto flex h-full w-[24px] items-center justify-center bg-[#4a4a4a]">
              <Chev />
            </div>
          </div>
        </div>
      </div>
    </div>
  );
}

function NavTri({ flip, stop, cn = '' }: { flip?: boolean; stop?: boolean; cn?: string }) {
  return (
    <svg width="10" height="11" viewBox="0 0 10 11" className={`shrink-0 text-[#747474] ${flip ? '-scale-x-100' : ''} ${cn}`} fill="currentColor">
      <path d="M1 0l6 5.500L1 11z" />
      {stop && <rect x="8" y="0" width="2" height="11" />}
    </svg>
  );
}

function StatusBar() {
  return (
    <div className="flex h-[21px] shrink-0 items-center bg-[#4b4b4b] text-[12px] text-[#c8c8c8]">
      <span className="ml-[8px] w-[62px] font-['Liberation_Mono',monospace]">66.67%</span>
      <Chev size={13} className="text-[#ddd]" />
      <NavTri flip stop cn="ml-[17px]" />
      <NavTri flip cn="ml-[13px]" />
      <span className="ml-[16px] w-[46px] font-['Liberation_Mono',monospace] text-[#ddd]">1</span>
      <Chev size={13} className="text-[#ddd]" />
      <NavTri cn="ml-[16px]" />
      <NavTri stop cn="ml-[13px]" />
      <span className="ml-[121px] w-[31px] whitespace-nowrap text-[14px] leading-[18px] text-[#bbb]">选择</span>
      <div className="ml-[116px] h-0 w-0 border-y-[5px] border-l-[7px] border-y-transparent border-l-[#c8c8c8]" />
      <ChevronRight size={12} className="ml-[14px] rotate-180 text-[#bbb]" />
      <div className="ml-[412px] h-[18px] w-[31px] rounded-[7px] bg-[#626262]" />
      <ChevronRight size={12} className="ml-auto mr-[27px] text-[#bbb]" />
    </div>
  );
}

function CenterArea() {
  return (
    <div className="relative flex min-w-0 flex-1 flex-col bg-[#424242]">
      <div className="flex h-[35px] shrink-0 items-stretch">
        <div className="flex w-[484px] items-center bg-[#535353] pl-[12px] text-[14px] text-[#e4e4e4]">
          终于成功啦！！！！！！！.pdf* @ 66.67% (CMYK/GPU 预览)
          <span className="ml-auto mr-[10px] text-[13px] font-bold font-['Liberation_Sans',sans-serif]">x</span>
        </div>
      </div>
      <div className="flex min-h-0 flex-1">
        <div className="relative min-w-0 flex-1 overflow-hidden bg-[#5f5f5f]">
          <Tree />
          <div className="absolute left-[239px] top-[605px] h-[48px] w-[99px] rounded-[3px] bg-[rgba(205,205,205,0.9)] pt-[7px] text-center text-[12px] leading-[17px] text-black font-['Liberation_Mono',monospace]">
            <div>D:152.12 mm</div>
            <div>1.53°</div>
          </div>
        </div>
        <div className="relative flex w-[22px] shrink-0 flex-col items-center justify-between bg-[#4b4b4b] py-[3px] text-[#8c8c8c]">
          <ChevronDown size={13} className="rotate-180" />
          <div className="absolute top-[457px] h-[31px] w-[13px] rounded-[6px] bg-[#626262]" />
          <ChevronDown size={13} />
        </div>
      </div>
      <StatusBar />
      <TransformPanel />
    </div>
  );
}

function TaskIcon({ children, running, active }: { children: ReactNode; running?: boolean; active?: boolean }) {
  return (
    <div className={`flex h-[59px] items-center ${active ? 'bg-[#5a5a5a]' : ''}`}>
      <div className={`w-[3px] ${running ? 'bg-[#e0a066]' : ''} ${active ? 'h-full' : 'h-[48px]'}`} />
      <div className="flex flex-1 justify-center pr-[3px]">{children}</div>
    </div>
  );
}

function OfficeIcon({ letter, from, mid, dark, badge }: { letter: string; from: string; mid: string; dark: string; badge: string }) {
  return (
    <div className="relative h-[27px] w-[30px]">
      <div className="absolute right-0 top-0 flex h-[27px] w-[23px] flex-col overflow-hidden rounded-[2px]">
        <div className="flex-1" style={{ background: from }} />
        <div className="flex-1" style={{ background: mid }} />
        <div className="flex-1" style={{ background: dark }} />
      </div>
      <div
        className="absolute left-0 top-[5px] flex h-[16px] w-[16px] items-center justify-center text-[12px] font-bold text-white font-['Liberation_Sans',sans-serif]"
        style={{ background: badge }}
      >
        {letter}
      </div>
    </div>
  );
}

function Taskbar() {
  return (
    <div className="flex h-full w-[79px] shrink-0 flex-col bg-[linear-gradient(to_bottom,#2f3031_0%,#3b3431_20%,#3f3530_34%,#3a3839_52%,#34363a_72%,#322e2b_88%,#3a332e_100%)] text-white">
      <div className="flex h-[50px] items-center justify-center">
        <svg width="21" height="21" viewBox="0 0 21 21" fill="#fff"><path d="M0 3l9-1.200V10H0zM10 1.600L21 0v10H10zM0 11h9v8.200L0 18zM10 11h11v10l-11-1.500z" /></svg>
      </div>
      <div className="flex h-[50px] items-center justify-center">
        <Search size={22} strokeWidth={1.300} className="-scale-x-100" />
      </div>
      <div className="flex h-[50px] items-center justify-center">
        <div className="h-[19px] w-[19px] rounded-full border-[3px] border-white" />
      </div>
      <div className="flex h-[48px] items-center justify-center">
        <svg width="21" height="20" viewBox="0 0 21 20" fill="none" stroke="#fff" strokeWidth="1.200"><path d="M0 1h13M0 19h13M2 5h11v10H2zM19 0v6M19 12v8" /><rect x="17" y="7" width="3" height="3" fill="#fff" /></svg>
      </div>
      <div className="h-[6px]" />
      <TaskIcon>
        <div className="relative h-[25px] w-[30px]">
          <div className="absolute right-0 top-0 h-[25px] w-[22px] bg-[linear-gradient(to_right,#ca64ea_50%,#9332bf_50%)]" />
          <div className="absolute left-0 top-[5px] flex h-[16px] w-[16px] items-center justify-center bg-[#7719aa] text-[12px] font-bold text-white font-['Liberation_Sans',sans-serif]">N</div>
        </div>
      </TaskIcon>
      <TaskIcon>
        <svg width="22" height="20" viewBox="0 0 22 20"><path d="M0 2h6l5 10 6-12h5L13 20H8z" fill="#0b7c78" /></svg>
      </TaskIcon>
      <TaskIcon>
        <svg width="28" height="24" viewBox="0 0 28 24"><path d="M0 0h11l2 3h15v21H0z" fill="#fad165" /><path d="M0 0h11l2 3H0z" fill="#d9a325" /><path d="M5 21v-7h18v7h-4v-3H9v3z" fill="#3f96d0" /></svg>
      </TaskIcon>
      <TaskIcon running>
        <div className="relative h-[28px] w-[28px] rounded-full bg-[conic-gradient(#ea4335_0deg_120deg,#fbbc05_120deg_220deg,#34a853_220deg_360deg)]">
          <div className="absolute left-[7px] top-[7px] h-[14px] w-[14px] rounded-full border-2 border-white bg-[#4285f4]" />
        </div>
      </TaskIcon>
      <TaskIcon running>
        <svg width="30" height="24" viewBox="0 0 30 24">
          <ellipse cx="11" cy="10" rx="11" ry="9.500" fill="#6fcf3c" />
          <path d="M5 17l0 5 5-4z" fill="#6fcf3c" />
          <ellipse cx="21" cy="15" rx="9" ry="7.500" fill="#f0f0f0" />
          <path d="M25 20l2 4-6-3z" fill="#f0f0f0" />
          <circle cx="8" cy="7" r="1.300" fill="#2b5d12" />
          <circle cx="14" cy="7" r="1.300" fill="#2b5d12" />
          <circle cx="18" cy="13" r="1.100" fill="#666" />
          <circle cx="24" cy="13" r="1.100" fill="#666" />
        </svg>
      </TaskIcon>
      <TaskIcon running>
        <OfficeIcon letter="X" from="#33c481" mid="#21a366" dark="#185c37" badge="#107c41" />
      </TaskIcon>
      <TaskIcon running active>
        <div className="flex h-[27px] w-[27px] items-center justify-center border-2 border-[#ff7c00] bg-[#330000] text-[17px] font-bold leading-none text-[#ff9a00] font-['Liberation_Sans',sans-serif]">Ai</div>
      </TaskIcon>
      <TaskIcon running>
        <OfficeIcon letter="W" from="#41a5ee" mid="#2b7cd3" dark="#103f91" badge="#185abd" />
      </TaskIcon>
      <TaskIcon running>
        <div className="flex h-[24px] w-[24px] rotate-[6deg] items-center justify-center rounded-[3px] bg-[#ececec] text-[15px] text-[#555] font-['Liberation_Serif',serif]">T</div>
      </TaskIcon>
      <div className="mt-auto flex flex-col items-center">
        <ChevronRight size={24} strokeWidth={1.200} className="ml-[34px]" />
        <div className="ml-[6px] mt-[10px] flex w-full items-center justify-center gap-[12px]">
          <svg width="16" height="16" viewBox="0 0 16 16" fill="none" stroke="#ddd" strokeWidth="1"><path d="M1 14A12 12 0 0114 2M4 14a9 9 0 017-9M7 14a5 5 0 014-4" strokeDasharray="1.500 .5" /><circle cx="13" cy="14" r="1.500" fill="#fff" stroke="none" /></svg>
          <svg width="20" height="16" viewBox="0 0 20 16" fill="none" stroke="#ddd" strokeWidth="1"><path d="M1 5h4l4-3v12l-4-3H1zM12 5c1 2 1 4 0 6M15 3c2 3 2 7 0 10" /></svg>
        </div>
        <div className="mt-[16px] flex w-full items-center justify-center gap-[17px] pr-[12px]">
          <span className="text-[20px] leading-none">英</span>
          <span className="flex h-[19px] w-[19px] items-center justify-center bg-white text-[14px] leading-none text-black">拼</span>
        </div>
        <div className="mt-[29px] text-center text-[15px] leading-[22.500px] text-[#eee]">
          <div className="text-[16px] font-['Liberation_Sans',sans-serif]">23:24</div>
          <div>星期二</div>
          <div className="whitespace-nowrap text-[16px] font-['Liberation_Sans',sans-serif]">2020/4/14</div>
        </div>
        <div className="mt-[22px]">
          <svg width="20" height="20" viewBox="0 0 20 20" fill="none" stroke="#fff" strokeWidth="1.200"><path d="M1 2h18v14h-6l-3 3-3-3H1z" /></svg>
        </div>
        <div className="mt-[20px] h-px w-full bg-[#a89a8c]" />
        <div className="h-[5px]" />
      </div>
    </div>
  );
}

export default function App() {
  return (
    <div className="flex h-[1080px] w-[1920px] overflow-hidden bg-[#3c3c3c] font-['Noto_Sans_CJK_SC','Noto_Sans',sans-serif]">
      <Taskbar />
      <div className="flex min-w-0 flex-1 flex-col">
        <MenuBar />
        <div className="h-[2px] shrink-0 bg-[#444]" />
        <ControlBar />
        <div className="h-[2px] shrink-0 bg-[#444]" />
        <div className="flex min-h-0 flex-1">
          <LeftTools />
          <CenterArea />
          <Dock />
          <div className="flex w-[303px] shrink-0 flex-col gap-[3px] bg-[#3c3c3c]">
            <div className="flex h-[11px] shrink-0 items-center justify-end bg-[#424242] pr-[8px] text-[9px] leading-none text-[#bbb]">»</div>
            <ColorPanel />
            <LibraryPanel />
            <GuidePanel />
            <BrushPanel />
            <LayersPanel />
          </div>
        </div>
      </div>
    </div>
  );
}
